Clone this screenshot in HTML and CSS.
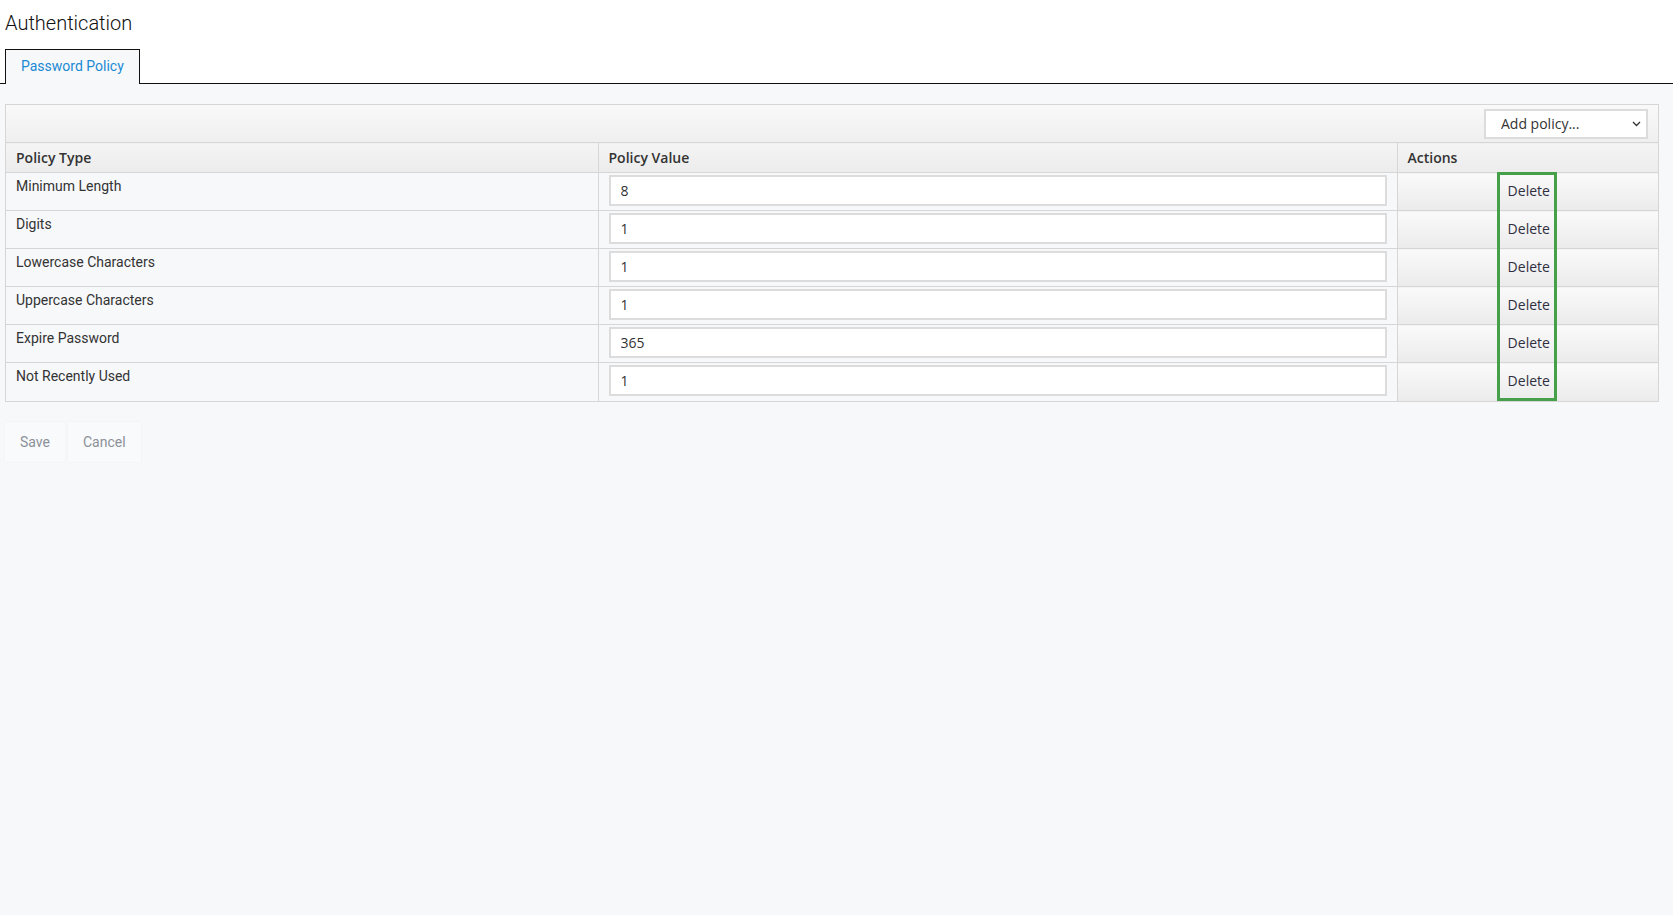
FILE: index.html
```html
<!DOCTYPE html>
<html lang="en">

<head>
    <meta charset="UTF-8">
    <title>Authentication</title>
    <link rel="stylesheet" href="styles.css">
</head>

<body>
    <div id="cabecalho">
        <h1 class="titulo">Authentication</h1>
        <ul class="abas">
            <li class="aba ativa">Password Policy</li>
        </ul>
    </div>

    <div id="conteudo">
        <div class="painel">
            <div class="barra">
                <div class="seletor">
                    <select class="add-policy">
                        <option>Add policy...</option>
                    </select>
                    <svg class="seta" width="9" height="6" viewBox="0 0 9 6">
                        <path d="M1 1 L4.5 4.5 L8 1" fill="none" stroke="#333" stroke-width="1.3" />
                    </svg>
                </div>
            </div>
            <table class="politicas">
                <colgroup>
                    <col class="col-tipo">
                    <col class="col-valor">
                    <col>
                </colgroup>
                <thead>
                    <tr>
                        <th>Policy Type</th>
                        <th>Policy Value</th>
                        <th>Actions</th>
                    </tr>
                </thead>
                <tbody>
                    <tr>
                        <td class="tipo">Minimum Length</td>
                        <td class="valor"><input type="text" value="8"></td>
                        <td class="acoes"><button class="btn-delete">Delete</button></td>
                    </tr>
                    <tr>
                        <td class="tipo">Digits</td>
                        <td class="valor"><input type="text" value="1"></td>
                        <td class="acoes"><button class="btn-delete">Delete</button></td>
                    </tr>
                    <tr>
                        <td class="tipo">Lowercase Characters</td>
                        <td class="valor"><input type="text" value="1"></td>
                        <td class="acoes"><button class="btn-delete">Delete</button></td>
                    </tr>
                    <tr>
                        <td class="tipo">Uppercase Characters</td>
                        <td class="valor"><input type="text" value="1"></td>
                        <td class="acoes"><button class="btn-delete">Delete</button></td>
                    </tr>
                    <tr>
                        <td class="tipo">Expire Password</td>
                        <td class="valor"><input type="text" value="365"></td>
                        <td class="acoes"><button class="btn-delete">Delete</button></td>
                    </tr>
                    <tr>
                        <td class="tipo">Not Recently Used</td>
                        <td class="valor"><input type="text" value="1"></td>
                        <td class="acoes"><button class="btn-delete">Delete</button></td>
                    </tr>
                </tbody>
            </table>
            <div class="destaque"></div>
        </div>

        <div class="rodape">
            <button class="btn-rodape">Save</button>
            <button class="btn-rodape">Cancel</button>
        </div>
    </div>
</body>

</html>
```

FILE: styles.css
```css
html,
body {
    margin: 0;
    padding: 0;
}

body {
    font-family: Roboto, "Liberation Sans", sans-serif;
    font-size: 14px;
    color: #333;
    background-color: #f7f8fa;
    min-height: 915px;
}

#cabecalho {
    background-color: #fff;
    padding-top: 11px;
}

.titulo {
    margin: 0;
    padding-left: 5px;
    font-size: 20px;
    font-weight: 300;
    line-height: 24px;
    color: #111;
}

.abas {
    list-style: none;
    margin: 14px 0 0 0;
    padding: 0 0 0 5px;
    border-bottom: 1px solid #111;
    display: flex;
}

.aba {
    padding: 6px 15px 8px 15px;
    line-height: 20px;
    border: 1px solid #111;
    border-bottom: none;
    margin-bottom: -1px;
    background-color: #f7f8fa;
    color: #1a8ad4;
}

#conteudo {
    padding: 20px 14px 0 5px;
}

.painel {
    position: relative;
    border: 1px solid #d6d6d6;
}

.barra {
    height: 37px;
    display: flex;
    justify-content: flex-end;
    align-items: center;
    padding-right: 10px;
    background: linear-gradient(#f9f9f9, #efefef);
}

.seletor {
    position: relative;
}

.add-policy {
    appearance: none;
    -webkit-appearance: none;
    width: 164px;
    height: 30px;
    border: 2px solid #dcdcdc;
    border-radius: 0;
    background-color: #fff;
    font-family: "Open Sans", sans-serif;
    font-size: 14px;
    color: #333;
    padding: 0 0 0 15px;
    display: block;
}

.seta {
    position: absolute;
    right: 7px;
    top: 12px;
    pointer-events: none;
}

.politicas {
    width: 100%;
    border-collapse: collapse;
    table-layout: fixed;
}

.col-tipo {
    width: 592px;
}

.col-valor {
    width: 799px;
}

.politicas th {
    height: 29px;
    padding: 0 10px;
    text-align: left;
    font-family: "Open Sans", sans-serif;
    font-weight: 600;
    font-size: 14px;
    color: #333;
    background: linear-gradient(#f4f4f4, #ececec);
    border-top: 1px solid #d6d6d6;
    border-left: 1px solid #d6d6d6;
    vertical-align: middle;
}

.politicas td {
    height: 38px;
    box-sizing: border-box;
    border-top: 1px solid #d6d6d6;
    border-left: 1px solid #d6d6d6;
}

.politicas th:first-child,
.politicas td:first-child {
    border-left: none;
}

.tipo {
    padding: 3px 10px 0 10px;
    vertical-align: top;
    line-height: 20px;
    color: #333;
}

.valor {
    padding: 2px 10px 3px 10px;
    vertical-align: top;
}

.valor input {
    width: 100%;
    height: 31px;
    box-sizing: border-box;
    border: 2px solid #dcdcdc;
    background-color: #fff;
    font-family: "Open Sans", sans-serif;
    font-size: 14px;
    color: #333;
    padding: 0 10px;
    margin: 0;
}

.acoes {
    text-align: center;
    vertical-align: middle;
    background: linear-gradient(#fafafa, #ebebeb);
}

.btn-delete {
    background: none;
    border: none;
    padding: 0 7px 2px 9px;
    font-family: "Open Sans", sans-serif;
    font-size: 14px;
    line-height: 20px;
    color: #2f2f3f;
    cursor: pointer;
}

.destaque {
    position: absolute;
    right: 101px;
    top: 67px;
    width: 60px;
    height: 229px;
    box-sizing: border-box;
    border: 3px solid #45a049;
}

.rodape {
    display: flex;
    gap: 3px;
    margin-top: 20px;
}

.btn-rodape {
    height: 40px;
    padding: 0 15px;
    border: none;
    background-color: #f9fafb;
    box-shadow: 0 0 2px rgba(0, 0, 0, 0.04);
    font-family: Roboto, sans-serif;
    font-size: 14px;
    color: #8b9099;
    cursor: pointer;
}
```
